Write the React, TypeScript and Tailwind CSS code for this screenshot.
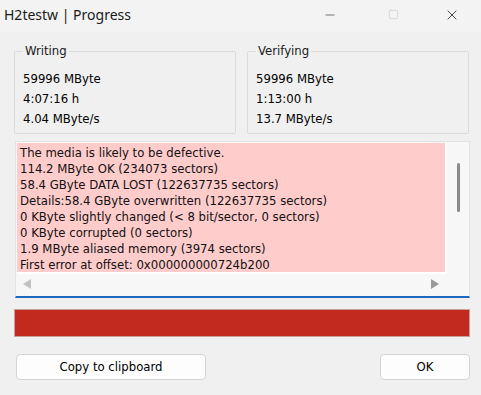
import { Minus, Square, X } from 'lucide-react';

const lines = [
  'The media is likely to be defective.',
  '114.2 MByte OK (234073 sectors)',
  '58.4 GByte DATA LOST (122637735 sectors)',
  'Details:58.4 GByte overwritten (122637735 sectors)',
  '0 KByte slightly changed (< 8 bit/sector, 0 sectors)',
  '0 KByte corrupted (0 sectors)',
  '1.9 MByte aliased memory (3974 sectors)',
  'First error at offset: 0x000000000724b200',
];

const GroupBox = ({ title, rows }: { title: string; rows: string[] }) => (
  <fieldset className="w-[222px] h-[90px] border border-[#dcdcdc] rounded-[2px] pl-[8px] pt-[11px]">
    <legend className="ml-0 px-[2px] text-[13px] leading-[14px] text-[#1a1a1a]">{title}</legend>
    {rows.map((r, i) => (
      <div key={i} className="text-[13px] leading-[20px] text-black">{r}</div>
    ))}
  </fieldset>
);

export default function App() {
  return (
    <div
      className="w-[481px] h-[395px] bg-[#f0f0f0] flex flex-col overflow-hidden"
      style={{ fontFamily: 'Tahoma, "DejaVu Sans Condensed", "Liberation Sans", sans-serif' }}
    >
      {/* title bar */}
      <div className="h-[32px] bg-[#f3f3f3] flex items-center shrink-0 pb-[3px]">
        <div className="pl-[4px] flex-1 text-[14px] text-[#1a1a1a]" style={{ fontFamily: '"Noto Sans", "Open Sans", sans-serif' }}>
          H2testw | Progress
        </div>
        <div className="w-[46px] h-[29px] flex items-center justify-center text-[#1a1a1a]">
          <Minus size={14} strokeWidth={1} />
        </div>
        <div className="w-[56px] h-[29px] ml-[12px] flex items-center justify-center text-[#c4c4c4]">
          <Square size={11} strokeWidth={1.2} />
        </div>
        <div className="w-[46px] h-[29px] ml-[8px] mr-[6px] flex items-center justify-center text-[#1a1a1a]">
          <X size={16} strokeWidth={1.2} />
        </div>
      </div>

      <div className="pl-[14px] pr-[11px] pt-[12px] flex flex-col">
        <div className="flex gap-[11px]">
          <GroupBox title="Writing" rows={['59996 MByte', '4:07:16 h', '4.04 MByte/s']} />
          <GroupBox title="Verifying" rows={['59996 MByte', '1:13:00 h', '13.7 MByte/s']} />
        </div>

        {/* log list */}
        <div className="mt-[7px] ml-[1px] w-[455px] h-[157px] border border-[#e3e3e3] border-b-2 border-b-[#1c67bf] bg-[#f7f7f7] flex flex-col">
          <div className="flex flex-1">
            <div className="w-[430px] h-[131px] ml-[1px] mt-[1px] bg-[#ffcccc] border-r-2 border-b-2 border-white pl-[3px] pt-[2px] overflow-hidden">
              {lines.map((l, i) => (
                <div key={i} className="text-[13px] leading-[16px] text-[#111] whitespace-nowrap">{l}</div>
              ))}
            </div>
            <div className="flex-1 flex justify-center pt-[21px]">
              <div className="w-[3px] h-[49px] bg-[#8a8a8a] rounded-full ml-[1px]" />
            </div>
          </div>
          <div className="h-[22px] flex items-center justify-between pl-[7px] pr-[30px] pb-[3px]">
            <svg width="8" height="10" viewBox="0 0 8 10"><path d="M8 0 L0 5 L8 10 Z" fill="#c2c2c2" /></svg>
            <svg width="8" height="10" viewBox="0 0 8 10"><path d="M0 0 L8 5 L0 10 Z" fill="#9a9a9a" /></svg>
          </div>
        </div>

        {/* progress bar */}
        <div className="mt-[11px] w-[456px] h-[28px] bg-[#c32a1e] border border-[#c9a09c]" />

        {/* buttons */}
        <div className="mt-[17px] flex justify-between">
          <button className="ml-[2px] w-[190px] h-[26px] bg-[#fdfdfd] border border-[#d4d4d4] rounded-[4px] text-[13px] text-black">
            Copy to clipboard
          </button>
          <button className="w-[90px] h-[26px] bg-[#fdfdfd] border border-[#d4d4d4] rounded-[4px] text-[13px] text-black">
            OK
          </button>
        </div>
      </div>
    </div>
  );
}
